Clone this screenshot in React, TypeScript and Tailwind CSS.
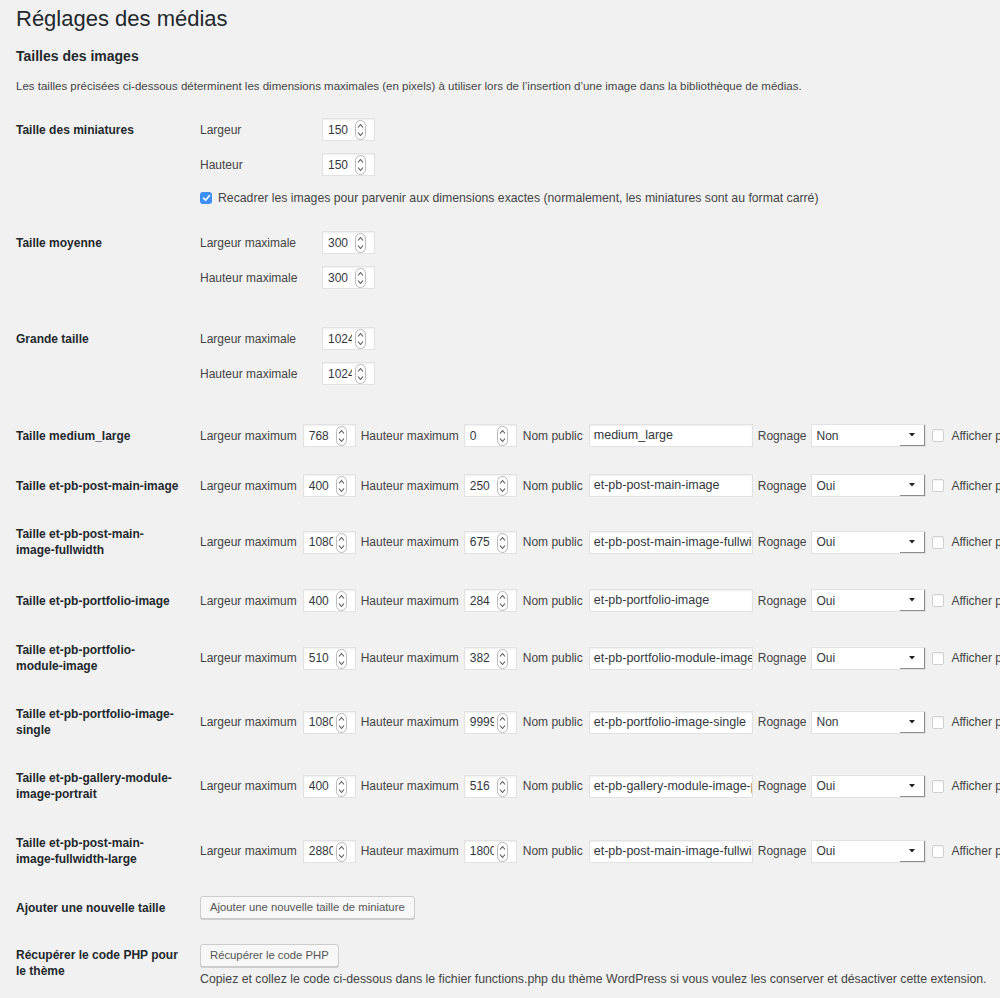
import React from "react";

function Spinner() {
  return (
    <svg width="11" height="20" viewBox="0 0 11 20" className="absolute left-[32px] top-[1px]">
      <rect x="0.5" y="0.5" width="10" height="19" rx="5" fill="#ffffff" stroke="#b9b9b9" />
      <path d="M3 7.5 L5.5 4.5 L8 7.5" fill="none" stroke="#555" strokeWidth="1.1" />
      <path d="M3 12.5 L5.5 15.5 L8 12.5" fill="none" stroke="#555" strokeWidth="1.1" />
    </svg>
  );
}

function NumberInput({ value, className = "" }: { value: string; className?: string }) {
  return (
    <div
      className={`relative h-[23px] w-[53px] shrink-0 bg-white border border-[#e2e2e2] shadow-[inset_0_1px_2px_rgba(0,0,0,0.07)] ${className}`}
    >
      <div className="absolute left-[5px] top-0 h-full w-[24px] overflow-hidden flex items-center text-[12px] text-[#32373c] whitespace-nowrap">
        {value}
      </div>
      <Spinner />
    </div>
  );
}

function TextInput({ value, className = "" }: { value: string; className?: string }) {
  return (
    <div
      className={`relative h-[23px] w-[164px] shrink-0 bg-white border border-[#e2e2e2] shadow-[inset_0_1px_2px_rgba(0,0,0,0.07)] ${className}`}
    >
      <div className="absolute left-[4px] top-0 h-full w-[158px] overflow-hidden flex items-center whitespace-nowrap text-[12.5px] text-[#32373c]">
        {value}
      </div>
    </div>
  );
}

function Select({ value, className = "" }: { value: string; className?: string }) {
  return (
    <div
      className={`h-[23px] w-[115px] shrink-0 bg-white border border-[#e2e2e2] flex ${className}`}
    >
      <div className="flex-1 flex items-center pl-[4px] text-[12px] text-[#32373c]">{value}</div>
      <div className="w-[25px] h-full flex items-center justify-center border-r border-b border-[#8c8c8c]">
        <svg width="6" height="4" viewBox="0 0 6 4">
          <path d="M0 0 L6 0 L3 3.5 Z" fill="#222" />
        </svg>
      </div>
    </div>
  );
}

function EmptyCheckbox({ className = "" }: { className?: string }) {
  return (
    <div
      className={`w-[12px] h-[13px] shrink-0 bg-white border border-[#cfcfcf] rounded-[2px] shadow-[inset_0_1px_1px_rgba(0,0,0,0.05)] ${className}`}
    />
  );
}

function CheckedBox() {
  return (
    <div className="w-[12px] h-[12px] shrink-0 rounded-[3px] bg-[#3b8ff6] flex items-center justify-center">
      <svg width="9" height="8" viewBox="0 0 9 8">
        <path d="M1.5 4.2 L3.6 6.2 L7.5 1.5" fill="none" stroke="#fff" strokeWidth="1.6" strokeLinecap="round" strokeLinejoin="round" />
      </svg>
    </div>
  );
}

type Row = {
  label: string[];
  w: string;
  h: string;
  name: string;
  crop: string;
  mt: string;
};

const rows: Row[] = [
  { label: ["Taille medium_large"], w: "768", h: "0", name: "medium_large", crop: "Non", mt: "mt-[39px]" },
  { label: ["Taille et-pb-post-main-image"], w: "400", h: "250", name: "et-pb-post-main-image", crop: "Oui", mt: "mt-[27px]" },
  { label: ["Taille et-pb-post-main-", "image-fullwidth"], w: "1080", h: "675", name: "et-pb-post-main-image-fullwidth", crop: "Oui", mt: "mt-[29px]" },
  { label: ["Taille et-pb-portfolio-image"], w: "400", h: "284", name: "et-pb-portfolio-image", crop: "Oui", mt: "mt-[31px]" },
  { label: ["Taille et-pb-portfolio-", "module-image"], w: "510", h: "382", name: "et-pb-portfolio-module-image", crop: "Oui", mt: "mt-[30px]" },
  { label: ["Taille et-pb-portfolio-image-", "single"], w: "1080", h: "9999", name: "et-pb-portfolio-image-single", crop: "Non", mt: "mt-[32px]" },
  { label: ["Taille et-pb-gallery-module-", "image-portrait"], w: "400", h: "516", name: "et-pb-gallery-module-image-portrait", crop: "Oui", mt: "mt-[32px]" },
  { label: ["Taille et-pb-post-main-", "image-fullwidth-large"], w: "2880", h: "1800", name: "et-pb-post-main-image-fullwidth-large", crop: "Oui", mt: "mt-[33px]" },
];

function Label({ lines }: { lines: string[] }) {
  return (
    <div className="w-[184px] shrink-0 text-[12px] leading-[16px] font-bold text-[#23282d] whitespace-nowrap">
      {lines.map((l, i) => (
        <div key={i}>{l}</div>
      ))}
    </div>
  );
}

function FieldLine({ label, value, className = "" }: { label: string; value: string; className?: string }) {
  return (
    <div className={`flex items-center ${className}`}>
      <div className="w-[122px] shrink-0 text-[12px] text-[#444]">{label}</div>
      <NumberInput value={value} />
    </div>
  );
}

function Button({ children }: { children: React.ReactNode }) {
  return (
    <div className="inline-flex h-[23px] items-center px-[9px] bg-[#f7f7f7] border border-[#cccccc] rounded-[3px] shadow-[0_1px_0_#cccccc] text-[11.3px] text-[#555] whitespace-nowrap">
      {children}
    </div>
  );
}

export default function App() {
  return (
    <div className="w-[1000px] h-[998px] overflow-hidden bg-[#f1f1f1] font-['Liberation_Sans',Arial,sans-serif] text-[#444] antialiased">
      <div className="pl-[16px] w-[1200px]">
        <h1 className="pt-[5px] text-[22px] leading-[28px] text-[#23282d] font-normal">Réglages des médias</h1>
        <h2 className="mt-[14px] text-[14px] leading-[18px] font-bold text-[#23282d]">Tailles des images</h2>
        <p className="mt-[13px] text-[11.5px] leading-[16px] text-[#444]">
          Les tailles précisées ci-dessous déterminent les dimensions maximales (en pixels) à utiliser lors de l’insertion d’une image dans la bibliothèque de médias.
        </p>

        {/* Taille des miniatures */}
        <div className="flex items-start mt-[24px]">
          <div className="h-[23px] flex items-center">
            <Label lines={["Taille des miniatures"]} />
          </div>
          <div className="flex flex-col">
            <FieldLine label="Largeur" value="150" />
            <FieldLine label="Hauteur" value="150" className="mt-[12px]" />
            <div className="mt-[14px] h-[16px] flex items-center">
              <CheckedBox />
              <span className="ml-[6px] text-[12.25px] text-[#444]">
                Recadrer les images pour parvenir aux dimensions exactes (normalement, les miniatures sont au format carré)
              </span>
            </div>
          </div>
        </div>

        {/* Taille moyenne */}
        <div className="flex items-start mt-[25px]">
          <div className="h-[23px] flex items-center">
            <Label lines={["Taille moyenne"]} />
          </div>
          <div className="flex flex-col">
            <FieldLine label="Largeur maximale" value="300" />
            <FieldLine label="Hauteur maximale" value="300" className="mt-[12px]" />
          </div>
        </div>

        {/* Grande taille */}
        <div className="flex items-start mt-[38px]">
          <div className="h-[23px] flex items-center">
            <Label lines={["Grande taille"]} />
          </div>
          <div className="flex flex-col">
            <FieldLine label="Largeur maximale" value="1024" />
            <FieldLine label="Hauteur maximale" value="1024" className="mt-[12px]" />
          </div>
        </div>

        {rows.map((r, i) => (
          <div key={i} className={`flex items-center ${r.mt}`}>
            <Label lines={r.label} />
            <div className="flex items-center whitespace-nowrap text-[12px] text-[#444]">
              <span>Largeur maximum</span>
              <NumberInput value={r.w} className="ml-[6px]" />
              <span className="ml-[5px]">Hauteur maximum</span>
              <NumberInput value={r.h} className="ml-[5px]" />
              <span className="ml-[6px]">Nom public</span>
              <TextInput value={r.name} className="ml-[6px]" />
              <span className="ml-[5px]">Rognage</span>
              <Select value={r.crop} className="ml-[5px]" />
              <EmptyCheckbox className="ml-[6px]" />
              <span className="ml-[7px]">Afficher pour la sélection</span>
            </div>
          </div>
        ))}

        {/* Ajouter */}
        <div className="flex items-center mt-[29px]">
          <Label lines={["Ajouter une nouvelle taille"]} />
          <Button>Ajouter une nouvelle taille de miniature</Button>
        </div>

        {/* Récupérer */}
        <div className="flex items-start mt-[25px]">
          <div className="pt-[3px]">
            <Label lines={["Récupérer le code PHP pour", "le thème"]} />
          </div>
          <div className="flex flex-col items-start">
            <Button>Récupérer le code PHP</Button>
            <div className="mt-[4px] text-[12.3px] leading-[16px] text-[#444] whitespace-nowrap">
              Copiez et collez le code ci-dessous dans le fichier functions.php du thème WordPress si vous voulez les conserver et désactiver cette extension.
            </div>
          </div>
        </div>
      </div>
    </div>
  );
}
